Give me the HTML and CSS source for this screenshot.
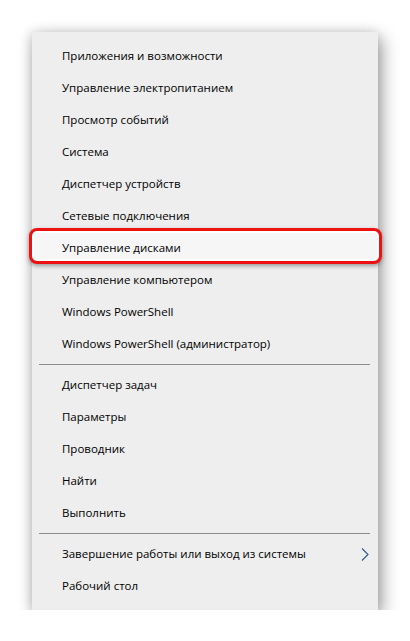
FILE: index.html
```html
<!DOCTYPE html>
<html lang="ru">
<head>
<meta charset="utf-8">
<link rel="stylesheet" href="styles.css">
</head>
<body>
<div class="page">
  <nav class="menu">
    <div class="item">Приложения и возможности</div>
    <div class="item">Управление электропитанием</div>
    <div class="item">Просмотр событий</div>
    <div class="item">Система</div>
    <div class="item">Диспетчер устройств</div>
    <div class="item">Сетевые подключения</div>
    <div class="item marked"><span class="label">Управление дисками</span></div>
    <div class="item">Управление компьютером</div>
    <div class="item">Windows PowerShell</div>
    <div class="item">Windows PowerShell (администратор)</div>
    <div class="sep"></div>
    <div class="item">Диспетчер задач</div>
    <div class="item">Параметры</div>
    <div class="item">Проводник</div>
    <div class="item">Найти</div>
    <div class="item">Выполнить</div>
    <div class="sep"></div>
    <div class="item sub"><span>Завершение работы или выход из системы</span>
      <svg class="chev" width="8" height="13" viewBox="0 0 8 13"><path d="M1 0.5 L7 6.5 L1 12.5" fill="none" stroke="#2b5a8a" stroke-width="1.1"/></svg>
    </div>
    <div class="item">Рабочий стол</div>
  </nav>
</div>
</body>
</html>
```

FILE: styles.css
```css
html, body {
  margin: 0;
  padding: 0;
  background: #ffffff;
}
.page {
  padding: 32px 0 0 32px;
}
.menu {
  width: 346px;
  box-sizing: border-box;
  background: #eeeeee;
  padding: 8px 0;
  box-shadow: 4px 6px 16px rgba(0,0,0,0.38), -2px 0 10px rgba(0,0,0,0.12);
  font-family: "Open Sans", "Noto Sans", sans-serif;
  font-size: 11.5px;
  color: #000;
}
.item {
  position: relative;
  height: 32px;
  box-sizing: border-box;
  display: flex;
  align-items: center;
  padding: 0 9px 2px 30px;
  white-space: nowrap;
}
.sub {
  justify-content: space-between;
}
.chev {
  display: block;
  margin-top: 2px;
}
.sep {
  height: 1px;
  margin: 4px 8px 4px 7px;
  background: #8c8c8c;
}
.marked::before {
  content: "";
  position: absolute;
  left: -3px;
  right: -4px;
  top: -4px;
  bottom: 0;
  border: 3px solid #ee1111;
  border-radius: 8px;
  background: #f6f6f6;
  box-shadow: inset 0 0 0 2px #ffffff, 0 2px 4px rgba(0,0,0,0.35);
}
.label {
  position: relative;
}
```
